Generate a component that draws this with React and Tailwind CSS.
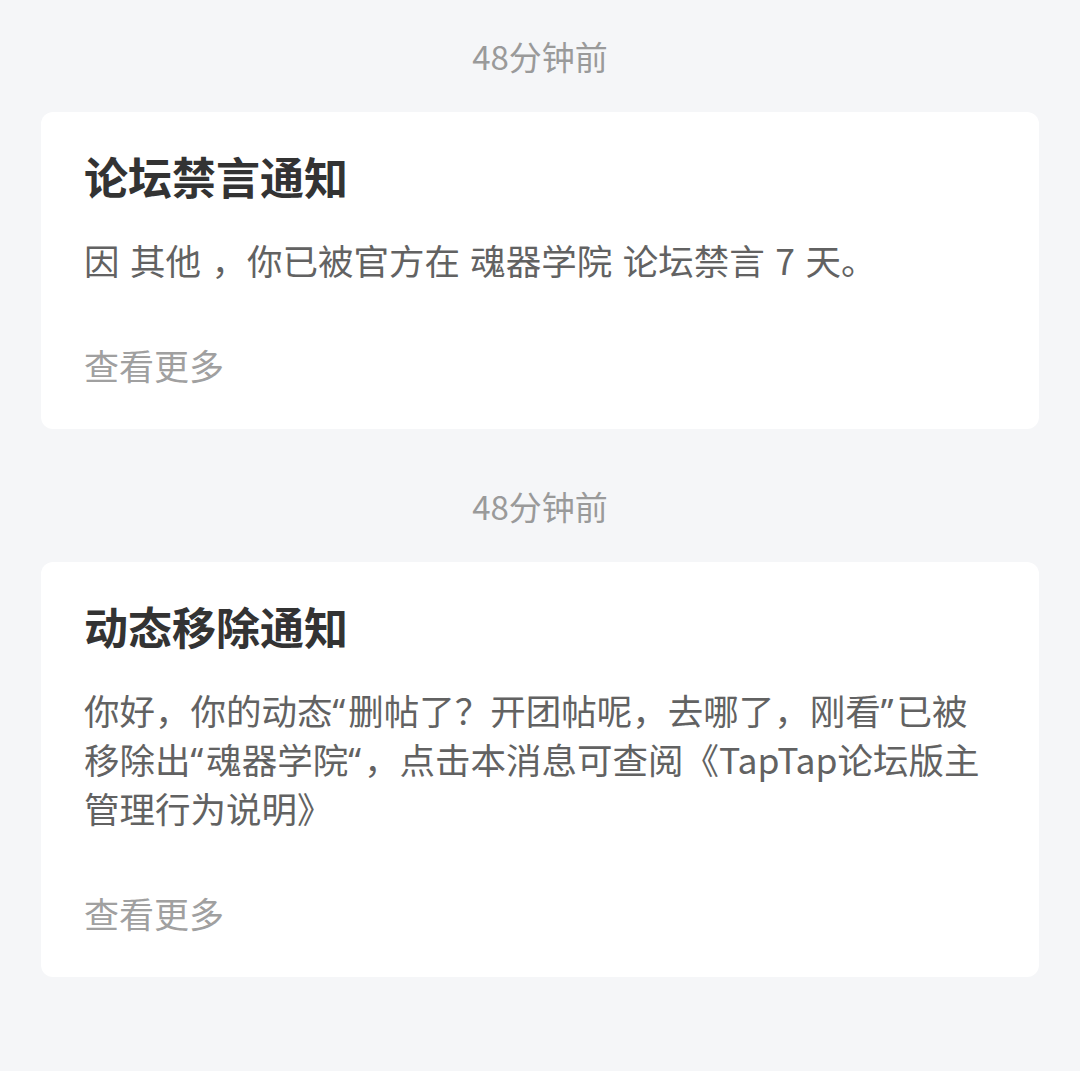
function Q({ c }) {
  return <span style={{ fontFamily: '"Noto Sans", sans-serif' }} className="tracking-[3px]">{c}</span>;
}

export default function App() {
  const items = [
    {
      time: "48分钟前",
      title: "论坛禁言通知",
      lines: [<span className="[word-spacing:2.5px]">因 其他 ，你已被官方在 魂器学院 论坛禁言 7 天。</span>],
    },
    {
      time: "48分钟前",
      title: "动态移除通知",
      lines: [
        <>你好，你的动态<Q c="“" />删帖了？开团帖呢，去哪了，刚看<Q c="”" />已被</>,
        <>移除出<Q c="“" />魂器学院<Q c="“" />，点击本消息可查阅《TapTap论坛版主</>,
        <>管理行为说明》</>,
      ],
    },
  ];
  return (
    <div
      className="min-h-[1071px] w-full bg-[#f5f6f8] px-[41px] pt-[32px]"
      style={{ fontFamily: '"Noto Sans CJK SC", "Noto Sans", sans-serif' }}
    >
      {items.map((it, i) => (
        <div key={i} className={i > 0 ? "mt-[53px]" : ""}>
          <div className="text-center text-[33px] leading-[48px] text-[#9a9a9a]">
            {it.time}
          </div>
          <div className="mt-[32px] rounded-[12px] bg-white px-[43px] pt-[34px] pb-[40px]">
            <div className="text-[44px] font-bold leading-[60px] text-[#333333]">
              {it.title}
            </div>
            <div className="mt-[30px] text-[35.5px] leading-[47px] text-[#626262]">
              {it.lines.map((l, j) => (
                <div key={j} className="whitespace-nowrap">
                  {l}
                </div>
              ))}
            </div>
            <div className="mt-[58px] text-[35px] leading-[48px] text-[#a0a0a0]">
              查看更多
            </div>
          </div>
        </div>
      ))}
    </div>
  );
}
